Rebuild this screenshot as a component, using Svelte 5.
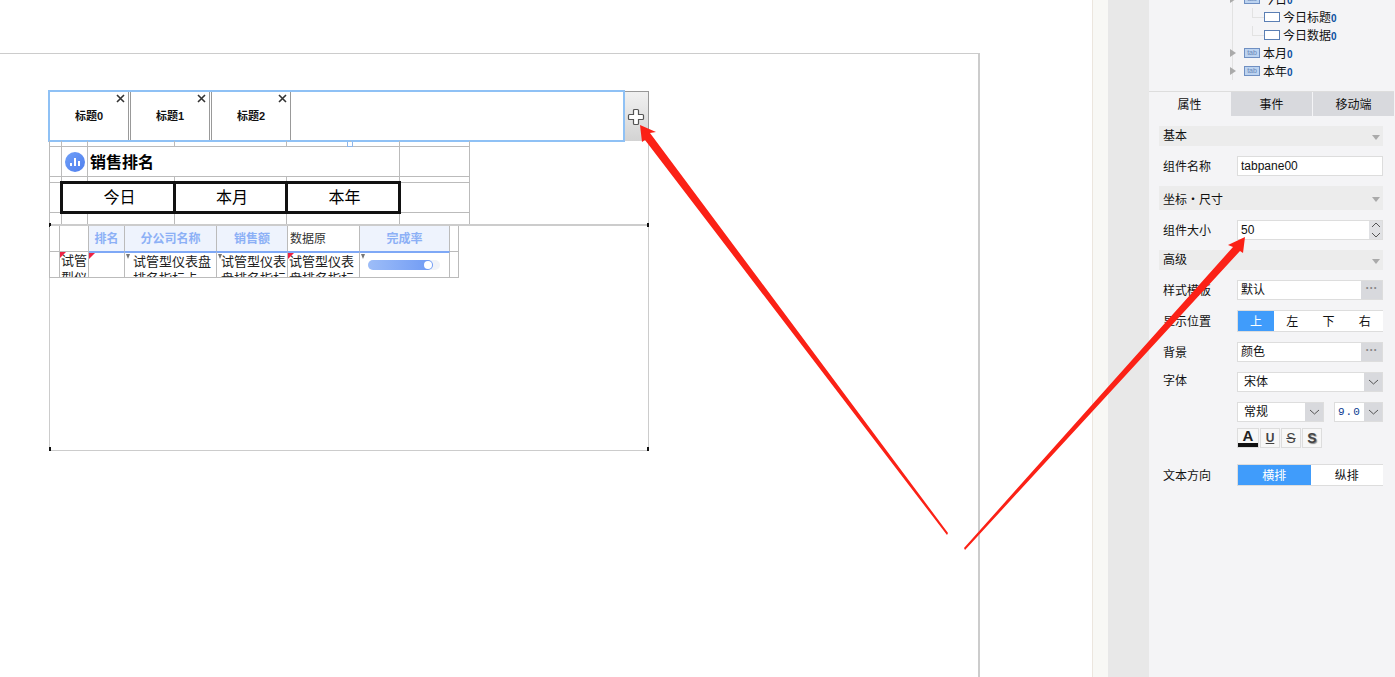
<script>
	const tabs = ['标题0', '标题1', '标题2'];
	const tree = [
		{ label: '今日', icon: 'tab', depth: 0, open: true },
		{ label: '今日标题', icon: 'box', depth: 1 },
		{ label: '今日数据', icon: 'box', depth: 1 },
		{ label: '本月', icon: 'tab', depth: 0 },
		{ label: '本年', icon: 'tab', depth: 0 }
	];
	const sideTabs = ['属性', '事件', '移动端'];
</script>

<div class="page">
	<div class="main">
		<div class="sheet">
			<div class="widget">
				<div class="tabbar">
					<div class="tabs">
						{#each tabs as tab, i}
							<div class="tab" class:first={i === 0}>
								<span>{tab}</span>
								<svg class="close" viewBox="0 0 9 9" width="9" height="9">
									<path d="M1 1l7 7M8 1l-7 7" stroke="#333" stroke-width="1.6" fill="none" />
								</svg>
							</div>
						{/each}
					</div>
					<div class="add">
						<svg viewBox="0 0 18 18" width="18" height="18">
							<path
								d="M6.500 2.500q0-1 1-1h3q1 0 1 1v4h4q1 0 1 1v3q0 1-1 1h-4v4q0 1-1 1h-3q-1 0-1-1v-4h-4q-1 0-1-1v-3q0-1 1-1h4z"
								fill="#fff"
								stroke="#555"
								stroke-width="1.2"
							/>
						</svg>
					</div>
				</div>

				<div class="frame">
					<i class="blue-handle"></i>
					<table class="head-table">
						<colgroup>
							<col style="width:12px" /><col style="width:26px" /><col style="width:87px" />
							<col style="width:112px" /><col style="width:64px" /><col style="width:49px" />
							<col style="width:70px" />
						</colgroup>
						<tbody>
							<tr class="r5">
								<td></td><td></td><td></td><td></td><td></td><td></td><td></td>
							</tr>
							<tr class="r30">
								<td></td>
								<td class="icon-cell">
									<svg viewBox="0 0 20 20" width="20" height="20">
										<defs>
											<linearGradient id="ball" x1="0" y1="0" x2="1" y2="1">
												<stop offset="0" stop-color="#6f9ff8" />
												<stop offset="1" stop-color="#4f7fee" />
											</linearGradient>
										</defs>
										<circle cx="10" cy="10" r="10" fill="url(#ball)" />
										<rect x="5" y="11" width="2" height="3" fill="#fff" />
										<rect x="9" y="6" width="2" height="8" fill="#fff" />
										<rect x="13" y="9" width="2" height="5" fill="#fff" />
									</svg>
								</td>
								<td colspan="4" class="title">销售排名</td>
								<td></td>
							</tr>
							<tr class="r6">
								<td></td><td></td><td></td><td></td><td colspan="2"></td><td></td>
							</tr>
							<tr class="r29">
								<td></td>
								<td colspan="2" class="period">今日</td>
								<td class="period">本月</td>
								<td colspan="2" class="period">本年</td>
								<td></td>
							</tr>
							<tr class="r13">
								<td></td><td></td><td></td><td></td><td colspan="2"></td><td></td>
							</tr>
						</tbody>
					</table>

					<div class="data-wrap">
						<i class="corner tl"></i><i class="corner tr"></i><i class="corner bl"></i><i class="corner br"></i>
						<div class="data">
							<div class="cell hd blank"></div>
							<div class="cell hd blank"></div>
							<div class="cell hd">排名</div>
							<div class="cell hd">分公司名称</div>
							<div class="cell hd">销售额</div>
							<div class="cell hd plain">数据原</div>
							<div class="cell hd">完成率</div>
							<div class="cell hd blank"></div>

							<div class="cell bd"></div>
							<div class="cell bd flag"><span>试管型仪表</span></div>
							<div class="cell bd flag line"></div>
							<div class="cell bd down line"><div class="ind">试管型仪表盘排名指标卡-店</div></div>
							<div class="cell bd down line"><div class="ind2">试管型仪表盘排名指标</div></div>
							<div class="cell bd flag line"><span>试管型仪表盘排名指标</span></div>
							<div class="cell bd down line">
								<div class="track"><div class="fill" style="width:90%"><i></i></div></div>
							</div>
							<div class="cell bd"></div>
						</div>
					</div>
				</div>
			</div>
		</div>
	</div>

	<div class="strip"></div>
	<div class="gutter"></div>

	<aside class="panel">
		<div class="tree">
			{#each tree as node}
				<div class="node" class:child={node.depth === 1}>
					<i class="vline"></i>
					{#if node.depth === 0}
						<i class="arrow" class:open={node.open}></i>
						<span class="tabicon">tab</span>
					{:else}
						<i class="branch"></i>
						<span class="boxicon"></span>
					{/if}
					<span class="name">{node.label}<b>0</b></span>
				</div>
			{/each}
		</div>

		<div class="side-tabs">
			{#each sideTabs as t, i}
				<div class="side-tab" class:on={i === 0}>{t}</div>
			{/each}
		</div>

		<div class="props">
			<div class="section s1">基本<i></i></div>
			<div class="row r-name">
				<label class="lb" for="n1">组件名称</label>
				<input id="n1" class="field" value="tabpane00" />
			</div>

			<div class="section s2">坐标・尺寸<i></i></div>
			<div class="row r-size">
				<span class="lb">组件大小</span>
				<div class="field spin">
					<span class="val">50</span>
					<div class="spinbtn">
						<svg viewBox="0 0 14 20" width="14" height="20">
							<path d="M3 7l4-4 4 4M3 13l4 4 4-4" stroke="#555" fill="none" />
						</svg>
					</div>
				</div>
			</div>

			<div class="section s3">高级<i></i></div>
			<div class="row r-tpl">
				<span class="lb">样式模板</span>
				<div class="field more"><span class="val">默认</span><div class="dots">···</div></div>
			</div>
			<div class="row r-pos">
				<span class="lb">显示位置</span>
				<div class="seg four">
					<div class="on">上</div><div>左</div><div>下</div><div>右</div>
				</div>
			</div>
			<div class="row r-bg">
				<span class="lb">背景</span>
				<div class="field more"><span class="val">颜色</span><div class="dots">···</div></div>
			</div>
			<div class="row r-font">
				<span class="lb top">字体</span>
				<div class="field sel"><span class="val pad">宋体</span><div class="chev"><svg viewBox="0 0 19 20" width="19" height="20"><path d="M5 8l4.500 4 4.500-4" stroke="#555" fill="none" /></svg></div></div>
			</div>
			<div class="row r-style">
				<span class="lb"></span>
				<div class="two">
					<div class="field sel s-weight"><span class="val pad">常规</span><div class="chev"><svg viewBox="0 0 19 20" width="19" height="20"><path d="M5 8l4.500 4 4.500-4" stroke="#555" fill="none" /></svg></div></div>
					<div class="field sel s-size"><span class="val mono">9.0</span><div class="chev"><svg viewBox="0 0 19 20" width="19" height="20"><path d="M5 8l4.500 4 4.500-4" stroke="#555" fill="none" /></svg></div></div>
				</div>
			</div>
			<div class="row r-btns">
				<span class="lb"></span>
				<div class="btns">
					<div class="fmt color">A</div>
					<div class="fmt under">U</div>
					<div class="fmt strike">S</div>
					<div class="fmt shadow">S</div>
				</div>
			</div>
			<div class="row r-dir">
				<span class="lb">文本方向</span>
				<div class="seg two-up">
					<div class="on">横排</div><div>纵排</div>
				</div>
			</div>
		</div>
	</aside>

	<svg class="arrows" viewBox="0 0 1395 677" width="1395" height="677">
		<polygon points="640,125 656,132 650,133 948,533 947,535 645,140 642,142" fill="#fb2116" />
		<polygon points="1245,237 1243,253 1240,251 965,550 964,548 1233,247 1228,245" fill="#fb2116" />
	</svg>
</div>

<style>
	:global(body) {
		margin: 0;
		background: #fff;
	}

	.page {
		position: relative;
		display: flex;
		width: 1395px;
		height: 677px;
		overflow: hidden;
		font-family: 'Liberation Sans', 'Noto Sans CJK SC', sans-serif;
		font-size: 12px;
		color: #111;
	}

	.main {
		width: 1092px;
		flex: none;
		padding-top: 53px;
		box-sizing: border-box;
		background: #fff;
	}

	.sheet {
		box-sizing: border-box;
		width: 980px;
		height: 624px;
		padding: 37px 0 0 49px;
		border-top: 1px solid #ccc;
		border-right: 2px solid #ccc;
	}

	.widget {
		width: 600px;
		height: 360px;
		display: flex;
		flex-direction: column;
	}

	/* tab header */
	.tabbar {
		display: flex;
		height: 50px;
		flex: none;
	}

	.tabs {
		display: flex;
		gap: 1px;
		box-sizing: border-box;
		position: relative;
		width: 577px;
		height: 52px;
		margin: -1px 0 -1px -1px;
		border: 2px solid #8fc1f5;
	}

	.tab {
		position: relative;
		box-sizing: border-box;
		width: 80px;
		display: flex;
		align-items: center;
		justify-content: center;
		padding-bottom: 2px;
		border-left: 1px solid #999;
		border-right: 1px solid #999;
		font-size: 11px;
		font-weight: 700;
	}

	.tab.first {
		width: 79px;
		border-left: 0;
	}

	.close {
		position: absolute;
		top: 2px;
		right: 3px;
	}

	.add {
		box-sizing: border-box;
		width: 24px;
		display: flex;
		align-items: center;
		justify-content: center;
		padding-right: 1px;
		background: linear-gradient(#f1f1f1, #d3d3d3);
		border-top: 1px solid #999;
		border-right: 1px solid #999;
	}

	.frame {
		position: relative;
		flex: 1;
		display: flex;
		flex-direction: column;
		box-sizing: border-box;
		border: 1px solid #ccc;
		border-top: 0;
	}

	.blue-handle {
		position: absolute;
		left: 297px;
		top: 1px;
		width: 4px;
		height: 4px;
		border: 1px solid #8fb6e8;
		border-top: 0;
		background: #fff;
	}

	/* title block */
	.head-table {
		width: 420px;
		table-layout: fixed;
		border-collapse: collapse;
		margin-left: -1px;
	}

	.head-table td {
		padding: 0;
		border: 1px solid #bbb;
		line-height: 1;
	}

	.r5 td {
		height: 5px;
		border-top: 0;
	}

	.r30 td {
		height: 29px;
	}

	.r6 td {
		height: 4px;
	}

	.r29 td {
		height: 27px;
	}

	.r13 td {
		height: 10px;
		border-bottom: 0;
	}

	.icon-cell svg {
		display: block;
		margin: 0 auto;
	}

	.head-table .title {
		height: 27px;
		padding: 2px 0 0 2px;
		font-size: 16px;
		font-weight: 700;
		color: #000;
	}

	.head-table .period {
		height: 26px;
		padding: 1px 0 0 3px;
		border: 3px solid #111;
		text-align: center;
		font-size: 16px;
		color: #000;
	}

	/* data block */
	.data-wrap {
		position: relative;
		flex: 1;
		border-top: 2px solid #ccc;
		margin-left: -1px;
		margin-right: -1px;
	}

	.corner {
		position: absolute;
		width: 2px;
		height: 4px;
		background: #111;
	}

	.tl {
		left: 0;
		top: -3px;
	}

	.tr {
		right: 0;
		top: -3px;
	}

	.bl {
		left: 0;
		bottom: -1px;
	}

	.br {
		right: 0;
		bottom: -1px;
	}

	.data {
		display: grid;
		grid-template-columns: 10px 29px 36px 92px 71px 72px 90px 9px;
		grid-template-rows: 25px 26px;
		width: 410px;
		box-sizing: border-box;
		border-left: 1px solid #bbb;
		border-bottom: 1px solid #bbb;
	}

	.cell {
		position: relative;
		overflow: hidden;
		box-sizing: border-box;
		border-right: 1px solid #bbb;
	}

	.hd {
		display: flex;
		align-items: center;
		justify-content: center;
		padding-bottom: 2px;
		background: #eef3fd;
		color: #8cb0f6;
		font-weight: 700;
		font-size: 12px;
	}

	.hd.blank,
	.hd.plain {
		background: #fff;
	}

	.hd.plain {
		justify-content: flex-start;
		color: #333;
		font-weight: 400;
		padding-left: 2px;
	}

	.bd {
		border-top: 1px solid #bbb;
		font-size: 13px;
		line-height: 17px;
		color: #222;
		padding: 0 1px;
	}

	.bd.line {
		border-top: 2px solid #7ea8f6;
	}

	.bd .ind {
		padding-left: 7px;
	}

	.bd .ind2 {
		padding-left: 3px;
	}

	.flag::before {
		content: '';
		position: absolute;
		left: 0;
		top: 0;
		border-top: 6px solid #ee2244;
		border-right: 6px solid transparent;
	}

	.down::before {
		content: '';
		position: absolute;
		left: 1px;
		top: 1px;
		border-top: 5px solid #777;
		border-left: 2px solid transparent;
		border-right: 2px solid transparent;
	}

	.track {
		margin: 7px 0 0 7px;
		width: 72px;
		height: 10px;
		border-radius: 5px;
		background: #f1f3f8;
	}

	.fill {
		position: relative;
		height: 10px;
		border-radius: 5px;
		background: linear-gradient(90deg, #9dbdf8, #6f9af4);
	}

	.fill i {
		position: absolute;
		right: 1px;
		top: 1px;
		width: 8px;
		height: 8px;
		border-radius: 50%;
		background: #fff;
	}

	/* side strips */
	.strip {
		width: 16px;
		flex: none;
		box-sizing: border-box;
		background: #f8f8f5;
		border-left: 1px solid #ece6de;
	}

	.gutter {
		width: 41px;
		flex: none;
		background: #e8e8e8;
	}

	.panel {
		flex: 1;
		min-width: 0;
		background: #f4f4f6;
	}

	/* tree */
	.tree {
		height: 91px;
		overflow: hidden;
		box-sizing: border-box;
	}

	.node {
		position: relative;
		display: flex;
		align-items: center;
		height: 18px;
		padding-left: 95px;
		white-space: nowrap;
	}

	.node:first-child {
		margin-top: -10px;
	}

	.node.child {
		padding-left: 115px;
	}

	.vline {
		position: absolute;
		left: 83px;
		top: 0;
		bottom: 0;
		border-left: 1px solid #e2e2e2;
	}

	.arrow {
		position: absolute;
		left: 81px;
		top: 5px;
		border-left: 6px solid #aaa;
		border-top: 4px solid transparent;
		border-bottom: 4px solid transparent;
	}

	.branch {
		position: absolute;
		left: 103px;
		top: 0;
		width: 11px;
		height: 9px;
		border-left: 1px solid #e2e2e2;
		border-bottom: 1px solid #e2e2e2;
	}

	.tabicon {
		box-sizing: border-box;
		width: 16px;
		height: 10px;
		margin-right: 3px;
		border: 1px solid #6f8fc2;
		background: #bcd3f0;
		color: #6a88b8;
		font-size: 7px;
		line-height: 8px;
		text-align: center;
	}

	.boxicon {
		box-sizing: border-box;
		width: 16px;
		height: 10px;
		margin-right: 3px;
		border: 1px solid #5b7fb4;
		background: #fff;
	}

	.name {
		padding-bottom: 2px;
	}

	.name b {
		font-size: 10px;
		font-weight: 700;
		color: #0a50a0;
	}

	.side-tabs {
		display: flex;
		height: 25px;
		border-top: 1px solid #ddd;
		box-sizing: border-box;
		gap: 1px;
		width: 245px;
	}

	.side-tab {
		flex: 1;
		display: flex;
		align-items: center;
		justify-content: center;
		padding-bottom: 2px;
		background: #d8d9dd;
	}

	.side-tab.on {
		background: #f4f4f6;
	}

	/* properties */
	.props {
		padding: 0 12px 0 10px;
	}

	.section {
		position: relative;
		display: flex;
		align-items: center;
		box-sizing: border-box;
		padding: 0 0 3px 4px;
		background: #ececec;
	}

	.section i {
		position: absolute;
		right: 3px;
		top: 50%;
		margin-top: -1px;
		border-top: 5px solid #aaa;
		border-left: 4px solid transparent;
		border-right: 4px solid transparent;
	}

	.s1,
	.s3 {
		height: 20px;
		margin-top: 10px;
	}

	.s2 {
		height: 24px;
		margin-top: 10px;
		padding-bottom: 0;
	}

	.row {
		display: grid;
		grid-template-columns: 74px 1fr;
		align-items: center;
		padding-left: 4px;
		margin-top: 10px;
		min-height: 20px;
	}

	.lb {
		padding-bottom: 2px;
	}

	.lb.top {
		align-self: start;
		margin-top: -1px;
	}

	.field {
		display: flex;
		align-items: stretch;
		box-sizing: border-box;
		height: 20px;
		width: 146px;
		background: #fff;
		border: 1px solid #ddd;
		font: inherit;
		padding: 0;
		color: #111;
		overflow: hidden;
	}

	input.field {
		padding-left: 3px;
		font-family: 'Liberation Sans', sans-serif;
		font-size: 12px;
		outline: none;
	}

	.val {
		flex: 1;
		line-height: 18px;
		padding-left: 3px;
	}

	.val.pad {
		padding-left: 6px;
	}

	.val.mono {
		font-family: 'Liberation Mono', monospace;
		font-size: 11px;
		color: #0a3a90;
		padding-left: 3px;
		letter-spacing: 1px;
	}

	.spinbtn {
		width: 14px;
		flex: none;
		background: #e0e1e4;
		margin: -1px -1px -1px 0;
	}

	.dots {
		width: 21px;
		flex: none;
		background: #d8d9dd;
		text-align: center;
		line-height: 17px;
		color: #888;
		font-weight: 700;
		margin: -1px 0;
	}

	.chev {
		width: 19px;
		flex: none;
		background: #d8d9dd;
		margin: -1px -1px -1px 0;
	}

	.seg {
		display: grid;
		box-sizing: border-box;
		width: 146px;
		height: 22px;
		background: #fff;
		border: 1px solid #ddd;
		border-right: 0;
	}

	.seg > div {
		display: flex;
		align-items: center;
		justify-content: center;
		padding-bottom: 2px;
	}

	.seg .on {
		background: #409cfb;
		color: #fff;
	}

	.four {
		grid-template-columns: repeat(4, 1fr);
	}

	.two-up {
		grid-template-columns: 1fr 1fr;
	}

	.two {
		display: flex;
		gap: 10px;
	}

	.s-weight {
		width: 87px;
	}

	.s-size {
		width: 49px;
	}

	.r-btns {
		margin-top: 6px;
	}

	.btns {
		display: flex;
		gap: 1px;
	}

	.fmt {
		box-sizing: border-box;
		width: 20px;
		height: 20px;
		display: flex;
		align-items: center;
		justify-content: center;
		background: #f7f7f7;
		border: 1px solid #ddd;
		font-weight: 700;
		font-size: 14px;
		color: #444;
	}

	.color {
		width: 22px;
		align-items: flex-start;
		line-height: 14px;
		font-size: 15px;
		color: #222;
		box-shadow: inset 0 -4px 0 #111;
	}

	.under {
		font-size: 12px;
		text-decoration: underline;
	}

	.strike {
		text-decoration: line-through;
		font-weight: 400;
	}

	.shadow {
		text-shadow: 1px 1px 1px #888;
	}

	.r-dir {
		margin-top: 16px;
	}

	.arrows {
		position: absolute;
		left: 0;
		top: 0;
		pointer-events: none;
	}
</style>
